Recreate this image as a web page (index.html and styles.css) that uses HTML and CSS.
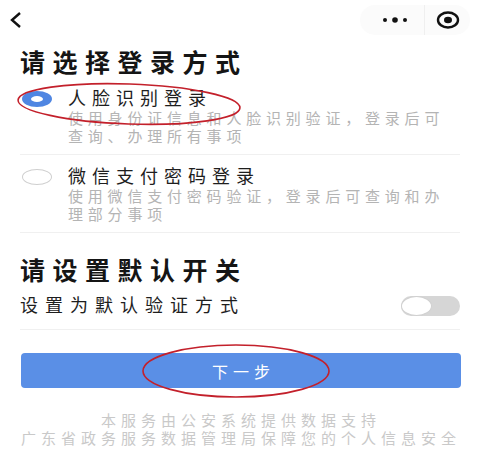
FILE: index.html
```html
<!DOCTYPE html>
<html lang="zh-CN">
<head>
    <meta charset="UTF-8">
    <meta name="viewport" content="width=device-width, initial-scale=1.0">
    <title>选择登录方式</title>
    <link rel="stylesheet" href="styles.css">
</head>
<body>
    <div class="page">
        <div class="nav-bar">
            <svg class="back" width="14" height="18" viewBox="0 0 14 18">
                <polyline points="11,2 3,9 11,16" fill="none" stroke="#111" stroke-width="2.4" stroke-linejoin="miter"/>
            </svg>
            <div class="capsule">
                <svg width="40" height="14" viewBox="0 0 40 14">
                    <circle cx="10" cy="7" r="2" fill="#111"/>
                    <circle cx="20" cy="7" r="2.8" fill="#111"/>
                    <circle cx="30" cy="7" r="2" fill="#111"/>
                </svg>
                <span class="capsule-line"></span>
                <svg width="28" height="20" viewBox="0 0 28 20">
                    <ellipse cx="14" cy="10" rx="10" ry="7.5" fill="none" stroke="#111" stroke-width="2.4"/>
                    <ellipse cx="14" cy="10" rx="4" ry="3.2" fill="#111"/>
                </svg>
            </div>
        </div>

        <div class="content">
            <h2 class="section-title">请选择登录方式</h2>

            <div class="option-list">
                <div class="option">
                    <span class="radio checked"></span>
                    <div class="option-text">
                        <div class="option-name">人脸识别登录</div>
                        <div class="option-desc">使用身份证信息和人脸识别验证，登录后可查询、办理所有事项</div>
                    </div>
                </div>
                <div class="option">
                    <span class="radio"></span>
                    <div class="option-text">
                        <div class="option-name">微信支付密码登录</div>
                        <div class="option-desc">使用微信支付密码验证，登录后可查询和办理部分事项</div>
                    </div>
                </div>
            </div>

            <h2 class="section-title second">请设置默认开关</h2>

            <div class="setting-row">
                <span class="setting-label">设置为默认验证方式</span>
                <span class="switch"><span class="switch-knob"></span></span>
            </div>

            <button class="next-btn">下一步</button>
        </div>

        <div class="footer">
            <p>本服务由公安系统提供数据支持</p>
            <p>广东省政务服务数据管理局保障您的个人信息安全</p>
        </div>

        <svg class="marks" width="477" height="461" viewBox="0 0 477 461">
            <ellipse cx="129" cy="104" rx="111" ry="20" fill="none" stroke="#c3202b" stroke-width="1.6" transform="rotate(2 129 104)"/>
            <ellipse cx="236" cy="371" rx="93" ry="26" fill="none" stroke="#c3202b" stroke-width="1.6"/>
        </svg>
    </div>
</body>
</html>
```

FILE: styles.css
```css
* {
    box-sizing: border-box;
}

body {
    margin: 0;
    background: #ffffff;
    font-family: "Liberation Sans", "Noto Sans CJK SC", sans-serif;
    color: #1a1a1a;
}

.page {
    width: 477px;
    height: 461px;
    position: relative;
    overflow: hidden;
}

.nav-bar {
    height: 39px;
    display: flex;
    align-items: center;
    justify-content: space-between;
    padding: 0 7px 0 9px;
}

.capsule {
    width: 110px;
    height: 30px;
    display: flex;
    align-items: center;
    justify-content: space-around;
    padding: 0 4px 0 10px;
    background: #fbfbfb;
    border-radius: 15px;
}

.capsule-line {
    width: 1px;
    height: 30px;
    background: #efefef;
}

.content {
    padding: 10px 17px 0 20px;
}

.section-title {
    margin: 0;
    font-size: 25px;
    line-height: 28px;
    font-weight: 700;
    letter-spacing: 7.5px;
    color: #151515;
}

.section-title.second {
    margin-top: 24px;
}

.option {
    display: flex;
    gap: 16px;
    padding: 11px 0 8px 2px;
    border-bottom: 1px solid #f0f0f0;
}

.radio {
    flex: none;
    width: 30px;
    height: 16px;
    margin-top: 3px;
    border: 1px solid #cfcfcf;
    border-radius: 50%;
    background: #ffffff;
}

.radio.checked {
    border-width: 5px 9px;
    border-color: #4f86e2;
}

.option-text {
    flex: 1;
}

.option-name {
    font-size: 18px;
    line-height: 22px;
    letter-spacing: 6px;
    color: #1e1e1e;
}

.option-desc {
    font-size: 15px;
    line-height: 18px;
    letter-spacing: 4.8px;
    color: #b4b4b4;
}

.setting-row {
    display: flex;
    align-items: center;
    justify-content: space-between;
    padding: 10px 0 12px;
    border-bottom: 1px solid #f0f0f0;
}

.setting-label {
    font-size: 18px;
    line-height: 22px;
    letter-spacing: 7px;
    color: #1e1e1e;
}

.switch {
    width: 59px;
    height: 20px;
    display: flex;
    background: #d6d6d6;
    border-radius: 10px;
}

.switch-knob {
    width: 31px;
    height: 20px;
    background: #ffffff;
    border: 1px solid #d0d0d0;
    border-radius: 50%;
}

.next-btn {
    display: block;
    width: 440px;
    height: 35px;
    margin: 23px 0 0 1px;
    border: none;
    border-radius: 4px;
    background: #5a8fe6;
    font-family: inherit;
    font-size: 16px;
    letter-spacing: 5px;
    text-indent: 5px;
    color: #ffffff;
}

.footer {
    margin-top: 24px;
    text-align: center;
}

.footer p {
    margin: 0;
    font-size: 15px;
    line-height: 18px;
    letter-spacing: 5px;
    text-indent: 5px;
    color: #c9c9c9;
}

.marks {
    position: absolute;
    left: 0;
    top: 0;
    pointer-events: none;
}
```
